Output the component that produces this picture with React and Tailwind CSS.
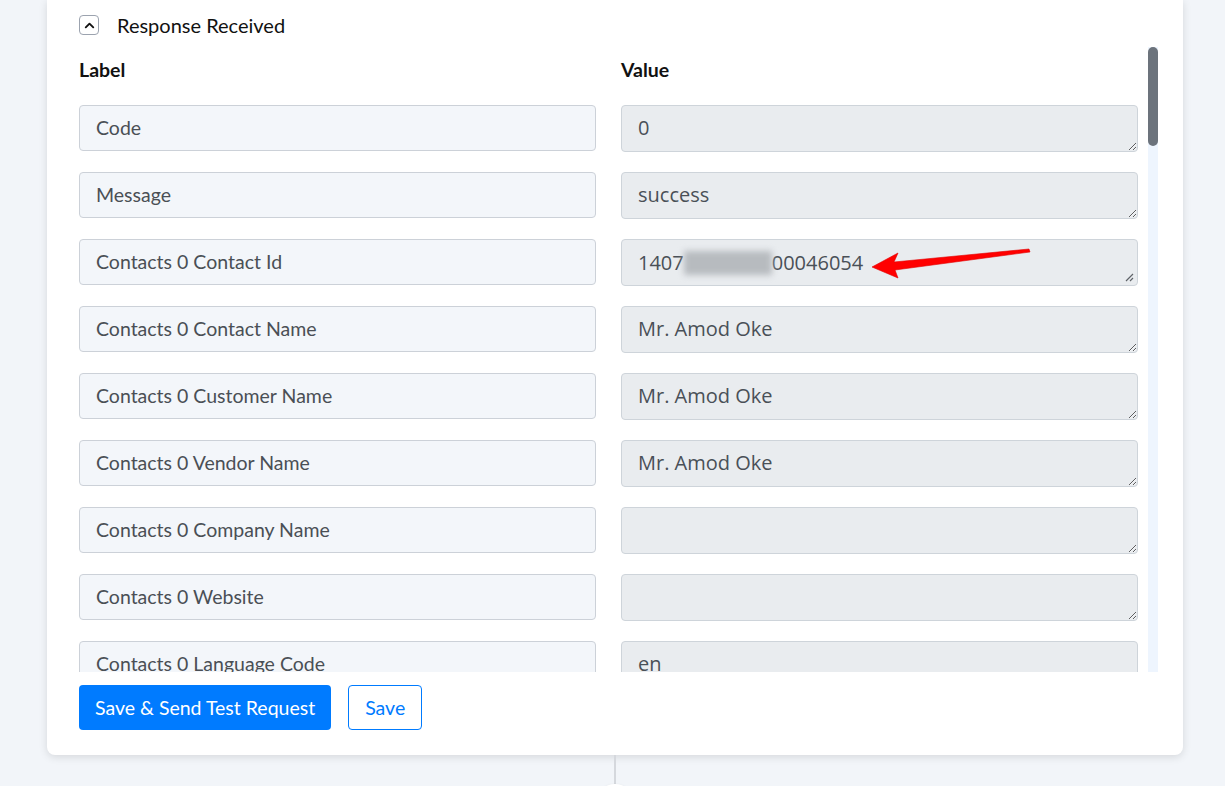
import { ChevronUp } from "lucide-react";

const rows = [
  { label: "Code", value: "0" },
  { label: "Message", value: "success" },
  { label: "Contacts 0 Contact Id", value: null },
  { label: "Contacts 0 Contact Name", value: "Mr. Amod Oke" },
  { label: "Contacts 0 Customer Name", value: "Mr. Amod Oke" },
  { label: "Contacts 0 Vendor Name", value: "Mr. Amod Oke" },
  { label: "Contacts 0 Company Name", value: "" },
  { label: "Contacts 0 Website", value: "" },
  { label: "Contacts 0 Language Code", value: "en" },
];

const labelFont = { fontFamily: "Lato, 'Noto Sans', sans-serif" };
const valueFont = { fontFamily: "'Open Sans', 'Noto Sans', sans-serif" };

function ResizeGrip() {
  return (
    <svg width="10" height="10" viewBox="0 0 10 10" className="absolute right-[3px] bottom-[3px]">
      <path d="M9 2 L2 9 M9 6 L6 9" stroke="#5f6368" strokeWidth="1.2" />
    </svg>
  );
}

function RedArrow() {
  return (
    <svg
      width="170"
      height="40"
      viewBox="0 0 170 40"
      className="absolute left-[245px] top-[2px] pointer-events-none"
    >
      <polygon
        points="5,25 31,11 27,20 162,7 163,10 28,28 31,36"
        fill="#ff0000"
        stroke="#e00000"
        strokeWidth="0.6"
        strokeLinejoin="round"
      />
    </svg>
  );
}

function ValueBox({ value }) {
  if (value === null) {
    return (
      <div
        style={valueFont}
        className="relative h-[47px] rounded border border-[#ced4da] bg-[#e9ecef] px-4 flex items-center text-[20px] text-[#495057]"
      >
        <span>1407</span>
        <span className="inline-block w-[88px] h-[24px] bg-[#b7bbbf] blur-[3px]" />
        <span>00046054</span>
        <RedArrow />
        <ResizeGrip />
      </div>
    );
  }
  return (
    <textarea
      readOnly
      value={value}
      style={valueFont}
      className="block w-full h-[47px] rounded border border-[#ced4da] bg-[#e9ecef] px-4 py-[8px] text-[20px] leading-[28px] text-[#495057] outline-none"
    />
  );
}

export default function App() {
  return (
    <div className="h-[786px] bg-[#f2f5f9] flex flex-col items-start overflow-hidden">
      {/* card */}
      <div className="shrink-0 ml-[47px] w-[1136px] bg-white rounded-b-lg shadow-[0_2px_8px_rgba(0,0,0,0.12)] pl-8 pr-[25px] pt-[15px] pb-[25px]">
        <div className="flex items-center gap-[18px] h-[20px]">
          <button className="w-[20px] h-[20px] rounded border border-[#9ca3af] flex items-center justify-center">
            <ChevronUp size={15} strokeWidth={3} color="#111" />
          </button>
          <span style={labelFont} className="text-[20px] text-[#111]">
            Response Received
          </span>
        </div>

        <div className="flex mt-[12px] h-[625px]">
          <div className="w-[1059px] overflow-hidden">
            <div className="grid grid-cols-2 gap-x-[25px] pt-[11px]">
              <div style={labelFont} className="font-bold text-[19.5px] leading-[24px] text-[#111] mb-[23px]">
                Label
              </div>
              <div style={labelFont} className="font-bold text-[19.5px] leading-[24px] text-[#111] mb-[23px]">
                Value
              </div>
            </div>
            <div className="grid grid-cols-2 gap-x-[25px] gap-y-5">
              {rows.map((r) => (
                <div key={r.label} className="contents">
                  <div
                    style={labelFont}
                    className="h-[46px] rounded border border-[#ccd1d8] bg-[#f3f6fa] px-4 flex items-center text-[19.5px] text-[#4a4f55]"
                  >
                    {r.label}
                  </div>
                  <ValueBox value={r.value} />
                </div>
              ))}
            </div>
          </div>

          {/* scrollbar */}
          <div className="ml-[10px] w-[10px] bg-[#eef5fe]">
            <div className="h-[99px] rounded-full bg-[#6c737c]" />
          </div>
        </div>

        <div className="flex items-center gap-[17px] mt-[13px]">
          <button
            style={labelFont}
            className="h-[45px] px-4 rounded bg-[#007bff] text-white text-[19.5px]"
          >
            Save &amp; Send Test Request
          </button>
          <button
            style={labelFont}
            className="h-[45px] px-4 rounded border border-[#007bff] bg-white text-[#007bff] text-[19.5px]"
          >
            Save
          </button>
        </div>
      </div>

      {/* connector below the card */}
      <div className="shrink-0 ml-[614px] w-[2px] h-[29px] bg-[#d5d8dd]" />
      <div className="shrink-0 ml-[597px] w-[36px] h-[36px] rounded-full bg-white shadow-sm" />
    </div>
  );
}
